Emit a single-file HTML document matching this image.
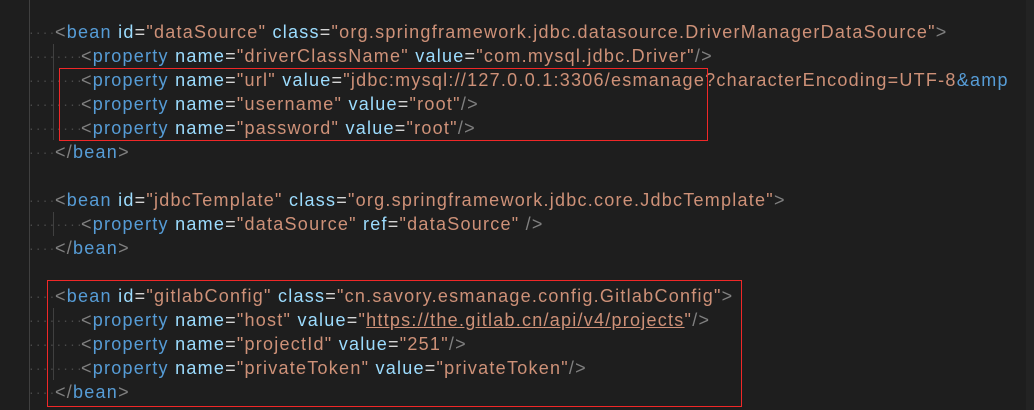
<!DOCTYPE html>
<html><head><meta charset="utf-8"><style>
body{margin:0;width:1034px;height:410px;background:#1e1e1e;overflow:hidden;position:relative;font-family:"Liberation Sans",sans-serif;font-size:18px;letter-spacing:1.25px;}
.l{position:absolute;white-space:pre;height:24px;line-height:24px;}
.p{color:#808080}.t{color:#569cd6}.a{color:#9cdcfe}.s{color:#ce9178}.e{color:#d4d4d4}
.d{position:absolute;white-space:pre;color:#4a4a4a;font-size:14px;line-height:24px;letter-spacing:2.2px}
.g{position:absolute;width:1px;background:#404040}
.r{position:absolute;background:#f02828}
u{text-decoration-color:#ce9178}
</style></head><body>
<div class="g" style="left:29px;top:0;height:410px"></div>
<div class="g" style="left:53px;top:44px;height:96px"></div>
<div class="g" style="left:53px;top:212px;height:24px"></div>
<div class="g" style="left:53px;top:308px;height:72px"></div>
<div style="position:absolute;right:0;top:0;width:8px;height:410px;background:#232323"></div>

<div class="d" style="left:29px;top:20px">····</div>
<div class="l" style="left:55px;top:20px"><span class="p">&lt;</span><span class="t">bean</span> <span class="a">id</span><span class="e">=</span><span class="s">"dataSource"</span> <span class="a">class</span><span class="e">=</span><span class="s">"org.springframework.jdbc.datasource.DriverManagerDataSource"</span><span class="p">&gt;</span></div>
<div class="d" style="left:29px;top:44px">········</div>
<div class="l" style="left:81px;top:44px"><span class="p">&lt;</span><span class="t">property</span> <span class="a">name</span><span class="e">=</span><span class="s">"driverClassName"</span> <span class="a">value</span><span class="e">=</span><span class="s">"com.mysql.jdbc.Driver"</span><span class="p">/&gt;</span></div>
<div class="d" style="left:29px;top:68px">········</div>
<div class="l" style="left:81px;top:68px"><span class="p">&lt;</span><span class="t">property</span> <span class="a">name</span><span class="e">=</span><span class="s">"url"</span> <span class="a">value</span><span class="e">=</span><span class="s">"jdbc:mysql://127.0.0.1:3306/esmanage?characterEncoding=UTF-8</span><span class="t">&amp;amp</span></div>
<div class="d" style="left:29px;top:92px">········</div>
<div class="l" style="left:81px;top:92px"><span class="p">&lt;</span><span class="t">property</span> <span class="a">name</span><span class="e">=</span><span class="s">"username"</span> <span class="a">value</span><span class="e">=</span><span class="s">"root"</span><span class="p">/&gt;</span></div>
<div class="d" style="left:29px;top:116px">········</div>
<div class="l" style="left:81px;top:116px"><span class="p">&lt;</span><span class="t">property</span> <span class="a">name</span><span class="e">=</span><span class="s">"password"</span> <span class="a">value</span><span class="e">=</span><span class="s">"root"</span><span class="p">/&gt;</span></div>
<div class="d" style="left:29px;top:140px">····</div>
<div class="l" style="left:55px;top:140px"><span class="p">&lt;/</span><span class="t">bean</span><span class="p">&gt;</span></div>

<div class="d" style="left:29px;top:188px">····</div>
<div class="l" style="left:55px;top:188px"><span class="p">&lt;</span><span class="t">bean</span> <span class="a">id</span><span class="e">=</span><span class="s">"jdbcTemplate"</span> <span class="a">class</span><span class="e">=</span><span class="s">"org.springframework.jdbc.core.JdbcTemplate"</span><span class="p">&gt;</span></div>
<div class="d" style="left:29px;top:212px">········</div>
<div class="l" style="left:81px;top:212px"><span class="p">&lt;</span><span class="t">property</span> <span class="a">name</span><span class="e">=</span><span class="s">"dataSource"</span> <span class="a">ref</span><span class="e">=</span><span class="s">"dataSource"</span> <span class="p">/&gt;</span></div>
<div class="d" style="left:29px;top:236px">····</div>
<div class="l" style="left:55px;top:236px"><span class="p">&lt;/</span><span class="t">bean</span><span class="p">&gt;</span></div>

<div class="d" style="left:29px;top:284px">····</div>
<div class="l" style="left:55px;top:284px"><span class="p">&lt;</span><span class="t">bean</span> <span class="a">id</span><span class="e">=</span><span class="s">"gitlabConfig"</span> <span class="a">class</span><span class="e">=</span><span class="s">"cn.savory.esmanage.config.GitlabConfig"</span><span class="p">&gt;</span></div>
<div class="d" style="left:29px;top:308px">········</div>
<div class="l" style="left:81px;top:308px"><span class="p">&lt;</span><span class="t">property</span> <span class="a">name</span><span class="e">=</span><span class="s">"host"</span> <span class="a">value</span><span class="e">=</span><span class="s">"<u>https://the.gitlab.cn/api/v4/projects</u>"</span><span class="p">/&gt;</span></div>
<div class="d" style="left:29px;top:332px">········</div>
<div class="l" style="left:81px;top:332px"><span class="p">&lt;</span><span class="t">property</span> <span class="a">name</span><span class="e">=</span><span class="s">"projectId"</span> <span class="a">value</span><span class="e">=</span><span class="s">"251"</span><span class="p">/&gt;</span></div>
<div class="d" style="left:29px;top:356px">········</div>
<div class="l" style="left:81px;top:356px"><span class="p">&lt;</span><span class="t">property</span> <span class="a">name</span><span class="e">=</span><span class="s">"privateToken"</span> <span class="a">value</span><span class="e">=</span><span class="s">"privateToken"</span><span class="p">/&gt;</span></div>
<div class="d" style="left:29px;top:380px">····</div>
<div class="l" style="left:55px;top:380px"><span class="p">&lt;/</span><span class="t">bean</span><span class="p">&gt;</span></div>

<div class="r" style="left:59px;top:68px;width:649px;height:1px"></div>
<div class="r" style="left:59px;top:140px;width:649px;height:1px"></div>
<div class="r" style="left:59px;top:68px;width:1px;height:73px"></div>
<div class="r" style="left:707px;top:68px;width:1px;height:73px"></div>

<div class="r" style="left:47px;top:280px;width:695px;height:1px"></div>
<div class="r" style="left:47px;top:406px;width:695px;height:1px"></div>
<div class="r" style="left:47px;top:280px;width:1px;height:127px"></div>
<div class="r" style="left:741px;top:280px;width:1px;height:127px"></div>
</body></html>
